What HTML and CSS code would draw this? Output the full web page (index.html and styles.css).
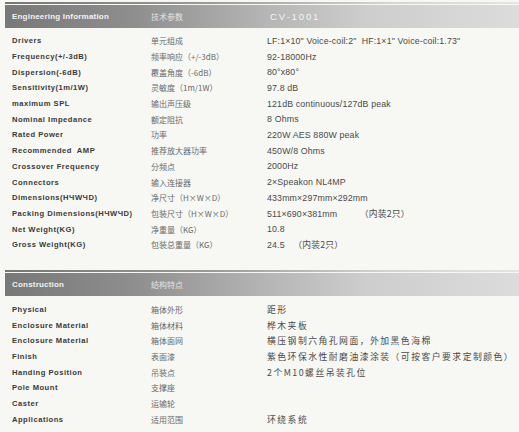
FILE: index.html
```html
<!DOCTYPE html>
<html>
<head>
<meta charset="utf-8">
<link rel="stylesheet" href="styles.css">
</head>
<body>
<div class="page">
  <section class="block">
    <div class="rule"></div>
    <div class="bar">
      <span class="h-en">Engineering Information</span>
      <span class="h-cn">技术参数</span>
      <span class="h-model">CV-1001</span>
    </div>
    <div class="rows">
      <div class="row"><span class="en">Drivers</span><span class="cn">单元组成</span><span class="val">LF:1×10" Voice-coil:2"&nbsp; HF:1×1" Voice-coil:1.73"</span></div>
      <div class="row"><span class="en">Frequency(+/-3dB)</span><span class="cn">频率响应（+/-3dB）</span><span class="val">92-18000Hz</span></div>
      <div class="row"><span class="en">Dispersion(-6dB)</span><span class="cn">覆盖角度（-6dB）</span><span class="val">80°x80°</span></div>
      <div class="row"><span class="en">Sensitivity(1m/1W)</span><span class="cn">灵敏度（1m/1W）</span><span class="val">97.8 dB</span></div>
      <div class="row"><span class="en">maximum SPL</span><span class="cn">输出声压级</span><span class="val">121dB continuous/127dB peak</span></div>
      <div class="row"><span class="en">Nominal Impedance</span><span class="cn">额定阻抗</span><span class="val">8 Ohms</span></div>
      <div class="row"><span class="en">Rated Power</span><span class="cn">功率</span><span class="val">220W AES 880W peak</span></div>
      <div class="row"><span class="en">Recommended&nbsp; AMP</span><span class="cn">推荐放大器功率</span><span class="val">450W/8 Ohms</span></div>
      <div class="row"><span class="en">Crossover Frequency</span><span class="cn">分频点</span><span class="val">2000Hz</span></div>
      <div class="row"><span class="en">Connectors</span><span class="cn">输入连接器</span><span class="val">2×Speakon NL4MP</span></div>
      <div class="row"><span class="en">Dimensions(HЧWЧD)</span><span class="cn">净尺寸（H×W×D）</span><span class="val">433mm×297mm×292mm</span></div>
      <div class="row"><span class="en">Packing Dimensions(HЧWЧD)</span><span class="cn">包装尺寸（H×W×D）</span><span class="val">511×690×381mm <span class="note">（内装2只）</span></span></div>
      <div class="row"><span class="en">Net Weight(KG)</span><span class="cn">净重量（KG）</span><span class="val">10.8</span></div>
      <div class="row"><span class="en">Gross Weight(KG)</span><span class="cn">包装总重量（KG）</span><span class="val">24.5 <span class="note2">（内装2只）</span></span></div>
    </div>
  </section>

  <section class="block second">
    <div class="rule"></div>
    <div class="bar">
      <span class="h-en">Construction</span>
      <span class="h-cn">结构特点</span>
      <span class="h-model"></span>
    </div>
    <div class="rows rows2">
      <div class="row"><span class="en">Physical</span><span class="cn">箱体外形</span><span class="val zh">距形</span></div>
      <div class="row"><span class="en">Enclosure Material</span><span class="cn">箱体材料</span><span class="val zh">桦木夹板</span></div>
      <div class="row"><span class="en">Enclosure Material</span><span class="cn">箱体面网</span><span class="val zh">横压钢制六角孔网面，外加黑色海棉</span></div>
      <div class="row"><span class="en">Finish</span><span class="cn">表面漆</span><span class="val zh">紫色环保水性耐磨油漆涂装（可按客户要求定制颜色）</span></div>
      <div class="row"><span class="en">Handing Position</span><span class="cn">吊装点</span><span class="val zh">2个M10螺丝吊装孔位</span></div>
      <div class="row"><span class="en">Pole Mount</span><span class="cn">支撑座</span><span class="val zh"></span></div>
      <div class="row"><span class="en">Caster</span><span class="cn">运输轮</span><span class="val zh"></span></div>
      <div class="row"><span class="en">Applications</span><span class="cn">适用范围</span><span class="val zh">环绕系统</span></div>
    </div>
  </section>
</div>
</body>
</html>
```

FILE: styles.css
```css
html, body {
  margin: 0;
  padding: 0;
  background: #f7f7f3;
}
body {
  font-family: "Liberation Sans", Arial, "Noto Sans CJK SC", sans-serif;
  width: 519px;
  height: 432px;
  overflow: hidden;
}
.page {
  padding: 2px 0 0 5px;
}
.block.second {
  margin-top: 17px;
}
.rule {
  height: 2px;
  background: linear-gradient(to right, #767676 0%, #9a9a9a 40%, #d4d4d4 75%, #e4e4e2 100%);
}
.bar {
  margin-top: 1px;
  height: 23px;
  display: grid;
  grid-template-columns: 139px 116px 1fr;
  align-items: center;
  padding-left: 7px;
  background: linear-gradient(to right, #787878 0%, #8e8e8e 25%, #b4b4b4 50%, #cdcdcd 70%, #dcdcdc 100%);
}
.h-en {
  font-weight: bold;
  font-size: 8px;
  letter-spacing: 0.2px;
  color: #f2f2f2;
}
.h-cn {
  font-family: "Noto Sans CJK SC", sans-serif;
  font-size: 8px;
  color: #e4e4e4;
}
.h-model {
  padding-left: 3px;
  font-size: 9.5px;
  letter-spacing: 1.9px;
  color: #f4f4f4;
}
.rows {
  padding: 5px 0 0 7px;
}
.rows2 {
  padding-top: 6px;
}
.row {
  display: grid;
  grid-template-columns: 139px 116px 1fr;
  height: 15.7px;
  align-items: center;
  white-space: nowrap;
}
.en {
  font-weight: bold;
  font-size: 7.6px;
  letter-spacing: 0.5px;
  color: #3a3a3a;
}
.cn {
  font-family: "Noto Sans CJK SC", sans-serif;
  font-size: 8px;
  color: #6a6a6a;
}
.val {
  font-size: 8.8px;
  color: #4a4a4a;
  letter-spacing: 0.15px;
}
.val.zh {
  font-family: "Noto Sans CJK SC", sans-serif;
  font-size: 8.8px;
  letter-spacing: 1.5px;
}
.note {
  font-family: "Noto Sans CJK SC", sans-serif;
  margin-left: 20px;
}
.note2 {
  font-family: "Noto Sans CJK SC", sans-serif;
  margin-left: 6px;
}
```
